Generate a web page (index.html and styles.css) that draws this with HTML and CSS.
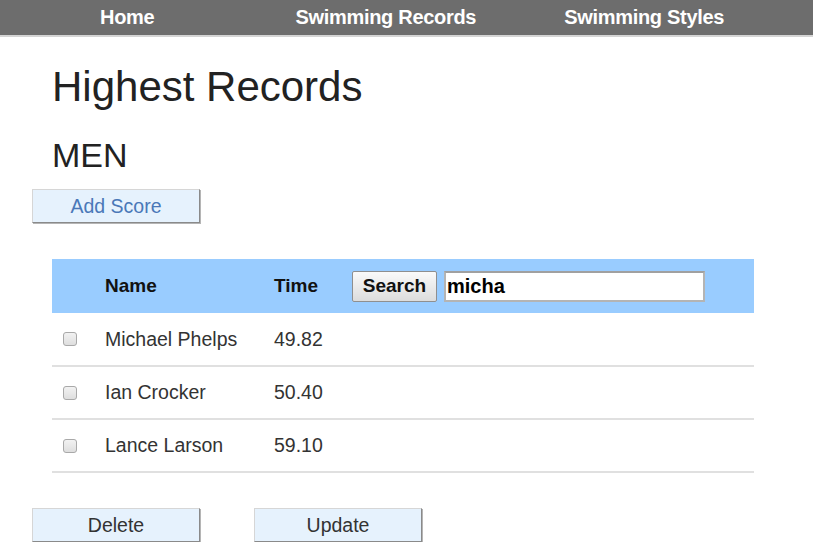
FILE: index.html
```html
<!DOCTYPE html>
<html>
<head>
<meta charset="utf-8">
<link rel="stylesheet" href="styles.css">
</head>
<body>
<nav class="topnav">
  <a class="nav-item nav-home" href="#">Home</a>
  <a class="nav-item nav-records" href="#">Swimming Records</a>
  <a class="nav-item nav-styles" href="#">Swimming Styles</a>
</nav>
<main class="content">
  <h1 class="title">Highest Records</h1>
  <h2 class="subtitle">MEN</h2>
  <button class="btn btn-add">Add Score</button>
  <table class="records">
    <colgroup>
      <col class="col-check">
      <col class="col-name">
      <col class="col-time">
      <col class="col-search">
    </colgroup>
    <thead>
      <tr>
        <th></th>
        <th>Name</th>
        <th>Time</th>
        <th>
          <div class="search-box">
            <button class="search-btn">Search</button>
            <input class="search-input" type="text" value="micha">
          </div>
        </th>
      </tr>
    </thead>
    <tbody>
      <tr>
        <td class="cell-check"><input type="checkbox" class="chk"></td>
        <td>Michael Phelps</td>
        <td>49.82</td>
        <td></td>
      </tr>
      <tr>
        <td class="cell-check"><input type="checkbox" class="chk"></td>
        <td>Ian Crocker</td>
        <td>50.40</td>
        <td></td>
      </tr>
      <tr>
        <td class="cell-check"><input type="checkbox" class="chk"></td>
        <td>Lance Larson</td>
        <td>59.10</td>
        <td></td>
      </tr>
    </tbody>
  </table>
  <div class="actions">
    <button class="btn btn-dark">Delete</button>
    <button class="btn btn-dark">Update</button>
  </div>
</main>
</body>
</html>
```
FILE: styles.css
```css
html, body {
  margin: 0;
  padding: 0;
  background: #ffffff;
}
body {
  font-family: "Liberation Sans", Arial, sans-serif;
  color: #333;
}
.topnav {
  height: 35px;
  background: #6d6d6d;
  border-bottom: 2px solid #d4d4d4;
  display: flex;
  align-items: center;
}
.nav-item {
  color: #ffffff;
  text-decoration: none;
  font-weight: bold;
  font-size: 20px;
  letter-spacing: -0.3px;
}
.nav-home { margin-left: 100px; }
.nav-records { margin-left: 141px; }
.nav-styles { margin-left: 88px; }

.content {
  padding: 0 0 0 32px;
}
.title {
  margin: 26px 0 0 20px;
  font-size: 42px;
  font-weight: normal;
  color: #222;
  line-height: 48px;
}
.subtitle {
  margin: 25px 0 0 20px;
  font-size: 34px;
  font-weight: normal;
  color: #222;
  line-height: 38px;
}
.btn {
  display: inline-block;
  width: 168px;
  height: 34px;
  background: #e6f2fd;
  border: 1px solid #d6d6d6;
  border-right-color: #8a8a8a;
  border-bottom-color: #8a8a8a;
  box-shadow: 1px 1px 0 #b5b5b5;
  font-family: "Liberation Sans", Arial, sans-serif;
  font-size: 19.5px;
  padding: 0;
  cursor: pointer;
}
.btn-add {
  margin-top: 15px;
  color: #4a78b8;
}
.btn-dark {
  color: #333;
}

.records {
  margin: 36px 0 0 20px;
  width: 702px;
  table-layout: fixed;
  border-collapse: collapse;
  font-size: 19.5px;
}
.col-check { width: 53px; }
.col-name { width: 169px; }
.col-time { width: 78px; }
.records thead tr {
  background: #99ccff;
  height: 54px;
}
.records th {
  text-align: left;
  font-weight: bold;
  color: #111;
  padding: 0;
  font-size: 19px;
}
.records tbody tr {
  height: 53px;
  border-bottom: 2px solid #e0e0e0;
}
.records td {
  padding: 0;
  color: #333;
}
.records td.cell-check { padding-left: 11px; }

.search-box {
  display: flex;
  align-items: center;
  gap: 7px;
}
.search-btn {
  width: 85px;
  height: 31px;
  font-family: "Liberation Sans", Arial, sans-serif;
  font-weight: bold;
  font-size: 19px;
  color: #111;
  background: linear-gradient(#fafafa, #dcdcdc);
  border: 1px solid #8f8f8f;
  border-radius: 2px;
  padding: 0;
}
.search-input {
  width: 256px;
  height: 27px;
  border: 2px solid #b4b4b4;
  border-top-color: #a0a0a0;
  padding: 0 0 0 1px;
  font-family: "Liberation Sans", Arial, sans-serif;
  font-weight: bold;
  font-size: 20px;
  color: #000;
  background: #fff;
}
.chk {
  -webkit-appearance: none;
  appearance: none;
  width: 14px;
  height: 14px;
  margin: 0;
  border: 1px solid #a9a9a9;
  border-radius: 3px;
  background: linear-gradient(#f2f2f2, #dedede);
  display: block;
}
.actions {
  margin-top: 35px;
  display: flex;
  gap: 54px;
}
```
